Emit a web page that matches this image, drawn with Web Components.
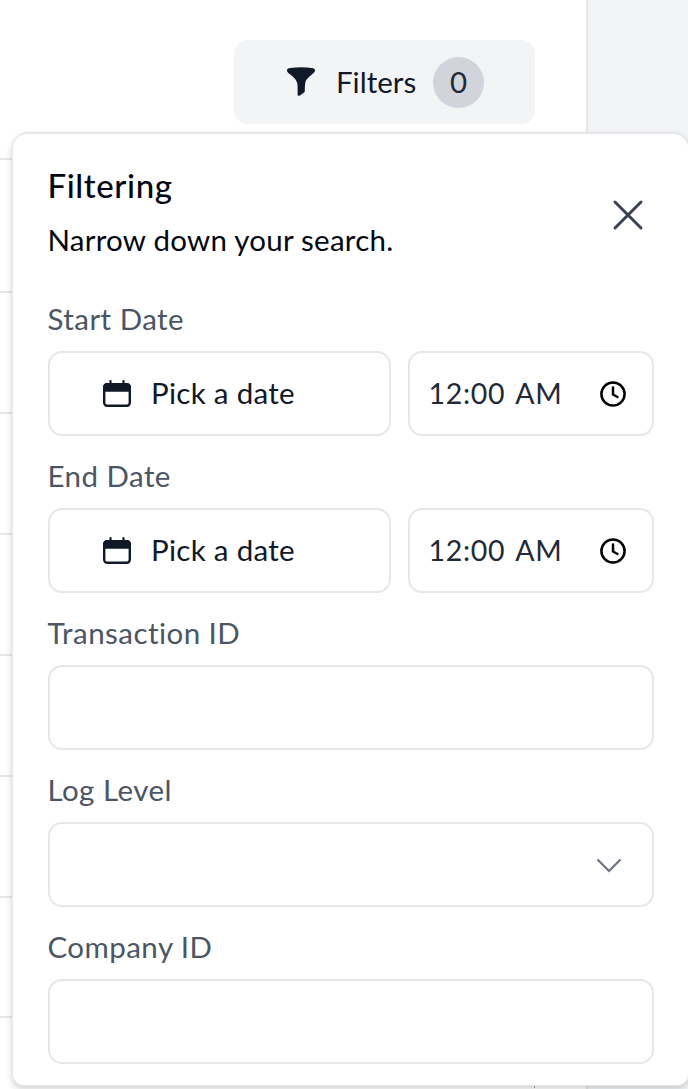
<!DOCTYPE html>
<html><head><meta charset="utf-8"><style>html,body{margin:0;padding:0;background:#fff}</style></head><body>
<log-page></log-page>
<template id="tf"><style>
:host{display:block}
label{display:block;color:#4b5563;height:42px;margin-bottom:10px;font:400 29.5px/40px var(--ff);letter-spacing:.45px}
.row{display:flex;gap:17px}
</style><label><slot name="label"></slot></label><div class="row"><slot></slot></div></template>
<script>
const ICONS={
cal:'<svg width="30" height="30" viewBox="0 0 30 30" fill="none"><rect x="2.2" y="5.2" width="25.6" height="21.6" rx="3" stroke="#111827" stroke-width="2.4"/><path d="M2.2 8.2a3 3 0 0 1 3-3h19.6a3 3 0 0 1 3 3v3.3H2.2z" fill="#111827" stroke="#111827" stroke-width="2.4"/><path d="M8.5 2v5M21.5 2v5" stroke="#111827" stroke-width="2.2" stroke-linecap="round"/></svg>',
clock:'<svg width="28" height="28" viewBox="0 0 28 28" fill="none" stroke="#000" stroke-width="2.5"><circle cx="14" cy="14" r="11.6"/><path d="M14 7.5V14.5L18.5 17" stroke-linecap="round" stroke-linejoin="round"/></svg>',
chev:'<svg width="28" height="16" viewBox="0 0 28 16" fill="none"><path d="M2.5 2.5 14 14 25.5 2.5" stroke="#6b7280" stroke-width="2.2"/></svg>',
x:'<svg width="32" height="32" viewBox="0 0 32 32" fill="none"><path d="M3 3 29 29M29 3 3 29" stroke="#374151" stroke-width="3" stroke-linecap="round"/></svg>',
funnel:'<svg width="30" height="30" viewBox="0 0 30 30"><path d="M1 3.5C1 2 2 1.5 4.5 1.1 11 0 19 0 25.5 1.1 28 1.5 29 2 29 3.5c0 1.2-.8 2-2 3.1C23.5 9.8 20 12 19.3 15.800 18.900 18 18.800 21 18.800 24c0 .9-.4 1.300-1.100 1.800l-3.900 2.700c-1 .7-2.200.2-2.200-1.100V20c0-2.500-.2-3.500-.8-5C9.500 11.500 6.500 9.500 3 6.600 1.800 5.500 1 4.700 1 3.500z" fill="#111827"/></svg>'};
function mk(name,css,html){customElements.define(name,class extends HTMLElement{connectedCallback(){if(this.shadowRoot)return;const s=this.attachShadow({mode:'open'});s.innerHTML='<style>'+css+'</style>'+html(this);}});}
const FF='"Lato","Open Sans",sans-serif';
customElements.define('form-field',class extends HTMLElement{constructor(){super();this.attachShadow({mode:'open'}).appendChild(document.getElementById('tf').content.cloneNode(true));}});
mk('date-box',':host{display:flex;box-sizing:border-box;flex:0 0 343px;height:85px;border:2px solid #e5e7eb;border-radius:14px;align-items:center;padding-left:52px;gap:19.5px;font:400 29.5px/1 '+FF+';letter-spacing:.3px;color:#111827;background:#fff}svg{display:block}span{position:relative;top:-.5px}',()=>ICONS.cal+'<span>Pick a date</span>');
mk('time-box',':host{display:flex;box-sizing:border-box;flex:1;height:85px;border:2px solid #e5e7eb;border-radius:14px;align-items:center;justify-content:space-between;padding:0 25px 0 19px;font:400 28.5px/1 '+FF+';color:#1f2937;background:#fff}svg{display:block}span{letter-spacing:.7px;word-spacing:3px}',()=>'<span>12:00 AM</span>'+ICONS.clock);
mk('text-box',':host{display:flex;box-sizing:border-box;flex:1;height:85px;border:2px solid #e5e7eb;border-radius:14px;align-items:center;justify-content:flex-end;padding-right:29px;background:#fff}svg{display:block}',h=>h.hasAttribute('select')?ICONS.chev:'');
mk('filter-button',':host{display:flex;box-sizing:border-box;width:301px;height:84px;background:#f3f4f6;border-radius:14px;align-items:center;padding-left:52px;font:400 29.5px/1 '+FF+';color:#111827}svg{display:block}.t{margin-left:20px}.b{margin-left:17px;width:51px;height:51px;border-radius:50%;background:#d1d5db;display:flex;align-items:center;justify-content:center;color:#1f2937}',()=>ICONS.funnel+'<span class="t">Filters</span><span class="b">0</span>');
mk('filter-popover',':host{display:block;position:absolute;left:12px;top:132px;box-sizing:border-box;width:677px;height:953.5px;background:#fff;border:1.5px solid #e5e7eb;border-top-width:2px;border-radius:16px 16px 12px 12px;padding:31px 34px 0 34.5px;box-shadow:0 3px 6px rgba(0,0,0,.18);font-family:'+FF+';color:#030712}h2{margin:0 0 13px;font:500 33px/40px '+FF+';letter-spacing:.6px;height:42px}p{margin:0 0 37px;font:400 29.5px/40px '+FF+';letter-spacing:.25px;height:42px}.x{position:absolute;right:44px;top:65px;display:block}.x svg{display:block}.f{display:grid;row-gap:20px}',()=>'<h2>Filtering</h2><p>Narrow down your search.</p><span class="x">'+ICONS.x+'</span><div class="f"><slot></slot></div>');
mk('table-rows',':host{display:block}div{border-top:2px solid #e5e7eb;box-sizing:border-box}.last{display:flex;justify-content:flex-end;align-items:flex-end}i{display:block;width:52px;height:5px;border-left:1px solid #9ca3af;box-sizing:border-box}',()=>[133,121,121,121,121,121,120].map(h=>'<div style="height:'+h+'px"></div>').join('')+'<div class="last" style="height:72px"><i></i></div>');
mk('log-page',':host{display:flex;position:relative;width:688px;height:1089px;overflow:hidden;background:#fff;--ff:'+FF+'}.m{flex:0 0 586px;position:relative}.top{display:flex;justify-content:flex-end;padding:40px 51px 0 0;height:94px}.s{flex:1;background:#f3f4f6;border-left:2px solid #e5e7eb}',()=>'<div class="m"><div class="top"><filter-button></filter-button></div><table-rows style="margin-top:24px"></table-rows></div><div class="s"></div><filter-popover><form-field><span slot="label">Start Date</span><date-box></date-box><time-box></time-box></form-field><form-field><span slot="label">End Date</span><date-box></date-box><time-box></time-box></form-field><form-field><span slot="label">Transaction ID</span><text-box></text-box></form-field><form-field><span slot="label">Log Level</span><text-box select></text-box></form-field><form-field><span slot="label">Company ID</span><text-box></text-box></form-field></filter-popover>');
</script></body></html>
